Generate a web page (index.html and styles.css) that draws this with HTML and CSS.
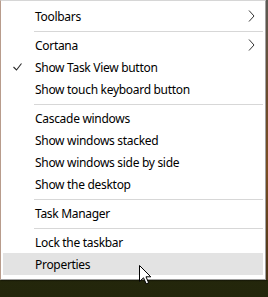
FILE: index.html
```html
<!DOCTYPE html>
<html lang="en">

<head>
    <meta charset="UTF-8">
    <title>Taskbar menu</title>
    <link rel="stylesheet" href="styles.css">
</head>

<body>
    <div class="desk">
        <div class="menu">
            <div class="item">
                <span class="mark"></span>
                <span class="label">Toolbars</span>
                <svg class="arrow" width="7" height="12" viewBox="0 0 7 12"><polyline points="1,0.5 6,6 1,11.5" /></svg>
            </div>
            <div class="sep"></div>
            <div class="item">
                <span class="mark"></span>
                <span class="label">Cortana</span>
                <svg class="arrow" width="7" height="12" viewBox="0 0 7 12"><polyline points="1,0.5 6,6 1,11.5" /></svg>
            </div>
            <div class="item">
                <span class="mark">
                    <svg width="9" height="8" viewBox="0 0 9 8"><polyline points="0.5,4 3.5,7 8.5,0.5" /></svg>
                </span>
                <span class="label">Show Task View button</span>
            </div>
            <div class="item">
                <span class="mark"></span>
                <span class="label">Show touch keyboard button</span>
            </div>
            <div class="sep"></div>
            <div class="item">
                <span class="mark"></span>
                <span class="label">Cascade windows</span>
            </div>
            <div class="item">
                <span class="mark"></span>
                <span class="label">Show windows stacked</span>
            </div>
            <div class="item">
                <span class="mark"></span>
                <span class="label">Show windows side by side</span>
            </div>
            <div class="item">
                <span class="mark"></span>
                <span class="label">Show the desktop</span>
            </div>
            <div class="sep"></div>
            <div class="item">
                <span class="mark"></span>
                <span class="label">Task Manager</span>
            </div>
            <div class="sep"></div>
            <div class="item">
                <span class="mark"></span>
                <span class="label">Lock the taskbar</span>
            </div>
            <div class="item hover">
                <span class="mark"></span>
                <span class="label">Properties</span>
            </div>
        </div>
        <div class="edge"></div>
    </div>

    <svg class="cursor" width="13" height="20" viewBox="0 0 13 20">
        <path d="M0.5,0.5 L0.5,16.5 L4.5,12.8 L7.2,18.8 L9.6,17.8 L7,11.8 L11.8,11.8 Z" />
    </svg>
</body>

</html>
```

FILE: styles.css
```css
* {
    box-sizing: border-box;
    margin: 0;
    padding: 0;
}

body {
    width: 268px;
    height: 297px;
    overflow: hidden;
    background: linear-gradient(180deg, #2c2f10 0%, #23260b 100%);
    font-family: "Noto Sans", "Open Sans", sans-serif;
    font-size: 12px;
    letter-spacing: -0.3px;
    color: #000;
    position: relative;
}

.desk {
    display: flex;
    align-items: flex-start;
}

.menu {
    width: 266px;
    display: flex;
    flex-direction: column;
    background: #fff;
    border: 1px solid #a0a0a0;
    border-left-color: #b89c8c;
    border-top-color: #d6d6d6;
    padding: 4px 2px;
    box-shadow: 1px 1px 1px rgba(0, 0, 0, 0.3);
}

.edge {
    width: 2px;
    height: 280px;
    background: linear-gradient(180deg, #5d5a54 0%, #6b4a2c 35%, #7a4d22 60%, #4a3418 100%);
}

.item {
    height: 22px;
    display: flex;
    align-items: center;
    padding-right: 8px;
}

.item.hover {
    background: #e3e3e3;
}

.mark {
    width: 32px;
    flex: none;
    display: flex;
    align-items: center;
    padding-left: 10px;
}

.mark svg {
    fill: none;
    stroke: #2a2a2a;
    stroke-width: 1.1;
}

.label {
    flex: 1;
    white-space: nowrap;
}

.arrow {
    fill: none;
    stroke: #333;
    stroke-width: 1;
}

.sep {
    height: 7px;
    padding-top: 4px;
    margin-left: 31px;
}

.sep::before {
    content: "";
    display: block;
    height: 1px;
    background: #d7d7d7;
}

.cursor {
    position: absolute;
    left: 139px;
    top: 265px;
    fill: #fff;
    stroke: #000;
    stroke-width: 1;
}
```
